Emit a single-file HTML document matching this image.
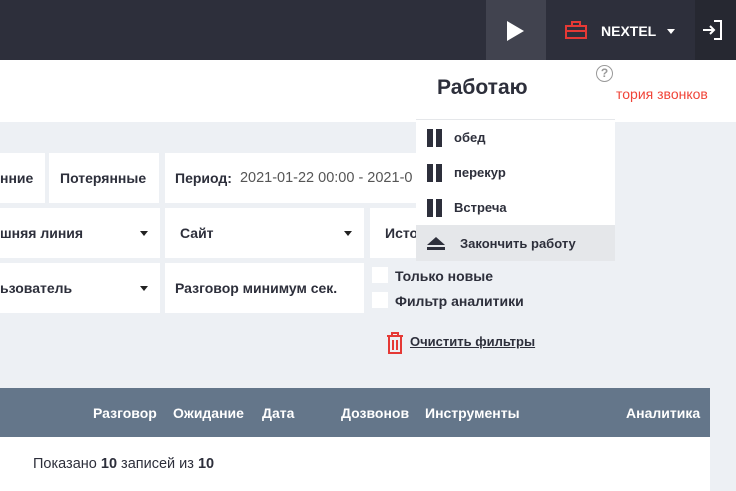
<!DOCTYPE html><html><head><meta charset="utf-8"><style>
*{margin:0;padding:0;box-sizing:border-box}
body{width:736px;height:491px;overflow:hidden;background:#edf0f4;font-family:"Liberation Sans",sans-serif;position:relative;color:#2d2f3b}
.a{position:absolute}
.box{position:absolute;background:#fff;font-weight:bold;font-size:14px;display:flex;align-items:center;padding-left:10px}
.car{position:absolute;right:12px;top:23px;border-left:4px solid transparent;border-right:4px solid transparent;border-top:5px solid #222}
.cb{position:absolute;width:16px;height:16px;background:#fff}
.mi{position:absolute;left:0;width:199px;height:35px;font-size:13px;font-weight:bold;display:flex;align-items:center}
.pz{display:inline-block;width:6px;height:18px;background:#2d2f3b;margin-right:3px}
</style></head><body>
<div class="a" style="left:0;top:0;width:736px;height:60px;background:#2d2f3b"></div>
<div class="a" style="left:486px;top:0;width:60px;height:60px;background:#41434f"></div>
<div class="a" style="left:507px;top:21px;border-left:17px solid #fff;border-top:10px solid transparent;border-bottom:10px solid transparent"></div>
<svg class="a" style="left:564px;top:20px" width="24" height="20" viewBox="0 0 24 20"><rect x="2" y="6" width="20" height="12" fill="none" stroke="#e53935" stroke-width="2"/><rect x="8" y="2" width="8" height="4" fill="none" stroke="#e53935" stroke-width="2"/><line x1="2" y1="11" x2="22" y2="11" stroke="#e53935" stroke-width="2"/></svg>
<div class="a" style="left:601px;top:23px;color:#fff;font-weight:bold;font-size:14px">NEXTEL</div>
<div class="a" style="left:667px;top:29px;border-left:4px solid transparent;border-right:4px solid transparent;border-top:5px solid #fff"></div>
<div class="a" style="left:695px;top:0;width:41px;height:60px;background:#262831"></div>
<svg class="a" style="left:702px;top:19px" width="22" height="22" viewBox="0 0 22 22"><path d="M12 2h7v18h-7" fill="none" stroke="#fff" stroke-width="2"/><path d="M1 11h11M8 7l4 4-4 4" fill="none" stroke="#fff" stroke-width="2"/></svg>
<div class="a" style="left:0;top:60px;width:736px;height:62px;background:#fff"></div>
<div class="a" style="left:616px;top:86px;color:#f04438;font-size:14px;white-space:nowrap">тория звонков</div>
<div class="box" style="left:0;top:153px;width:45px;height:50px;padding-left:0">нние</div>
<div class="box" style="left:49px;top:153px;width:110px;height:50px;padding-left:11px">Потерянные</div>
<div class="box" style="left:165px;top:153px;width:260px;height:50px">Период:<span style="font-weight:normal;color:#555;margin-left:8px;font-size:14.5px">2021-01-22 00:00 - 2021-0</span></div>
<div class="box" style="left:0;top:208px;width:160px;height:50px;padding-left:0">шняя линия<i class="car"></i></div>
<div class="box" style="left:165px;top:208px;width:199px;height:50px;padding-left:15px">Сайт<i class="car"></i></div>
<div class="box" style="left:370px;top:208px;width:60px;height:50px;padding-left:15px">Исто</div>
<div class="box" style="left:0;top:263px;width:160px;height:50px;padding-left:0">ьзователь<i class="car"></i></div>
<div class="box" style="left:165px;top:263px;width:199px;height:50px">Разговор минимум сек.</div>
<div class="cb" style="left:372px;top:267px"></div><div class="cb" style="left:372px;top:292px"></div>
<div class="a" style="left:395px;top:268px;font-size:14px;font-weight:bold">Только новые</div>
<div class="a" style="left:395px;top:293px;font-size:14px;font-weight:bold">Фильтр аналитики</div>
<svg class="a" style="left:385px;top:332px" width="20" height="22" viewBox="0 0 20 22"><path d="M2 4h16M7 4V1h6v3M4 4v17h12V4M8 8v10M12 8v10" fill="none" stroke="#e53935" stroke-width="2"/></svg>
<div class="a" style="left:410px;top:334px;font-size:13px;font-weight:bold;text-decoration:underline">Очистить фильтры</div>
<div class="a" style="left:0;top:388px;width:710px;height:49px;background:#64768a;color:#fff;font-weight:bold;font-size:14px">
<span class="a" style="left:93px;top:17px">Разговор</span><span class="a" style="left:173px;top:17px">Ожидание</span><span class="a" style="left:262px;top:17px">Дата</span><span class="a" style="left:341px;top:17px">Дозвонов</span><span class="a" style="left:425px;top:17px">Инструменты</span><span class="a" style="left:626px;top:17px">Аналитика</span></div>
<div class="a" style="left:0;top:437px;width:710px;height:54px;background:#fff;font-size:14.5px"><span class="a" style="left:33px;top:19px;white-space:nowrap">Показано <b>10</b> записей из <b>10</b></span></div>
<div class="a" style="left:416px;top:60px;width:199px;height:201px;background:#fff">
<div class="a" style="left:180px;top:5px;width:17px;height:17px;border:1.5px solid #999;border-radius:50%;color:#999;font-size:12px;text-align:center;line-height:14px;font-weight:bold">?</div>
<div class="a" style="left:21px;top:16px;font-size:21px;font-weight:bold">Работаю</div>
<div class="a" style="left:0;top:59px;width:199px;height:1px;background:#e5e7ea"></div>
<div class="mi" style="top:60px;padding-left:11px"><i class="pz"></i><i class="pz" style="margin-right:12px"></i>обед</div>
<div class="mi" style="top:95px;padding-left:11px"><i class="pz"></i><i class="pz" style="margin-right:12px"></i>перекур</div>
<div class="mi" style="top:130px;padding-left:11px"><i class="pz"></i><i class="pz" style="margin-right:12px"></i>Встреча</div>
<div class="mi" style="top:165px;height:36px;background:#e5e7ea;padding-left:10px"><svg width="20" height="16" viewBox="0 0 20 16" style="margin-right:14px"><path d="M10 2l9 8H1z" fill="#2d2f3b"/><rect x="1" y="12" width="18" height="3" fill="#2d2f3b"/></svg>Закончить работу</div>
</div>
</body></html>
